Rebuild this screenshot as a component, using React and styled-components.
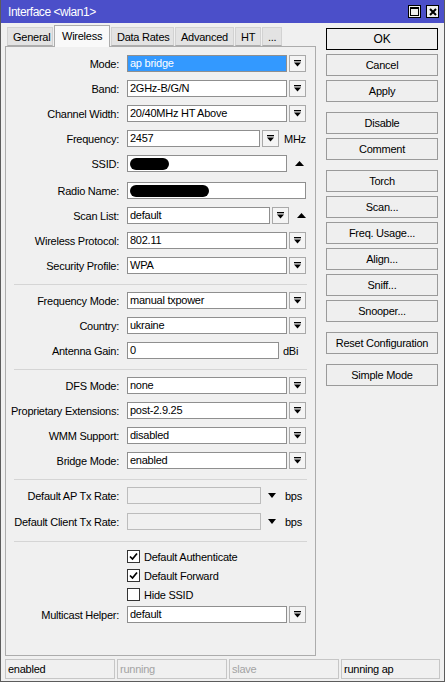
import React from 'react'
import styled, { createGlobalStyle } from 'styled-components'

const GlobalStyle = createGlobalStyle`
	html, body {
		margin: 0;
		padding: 0;
		background: #ffffff;
	}
	body {
		font-family: 'Liberation Sans', Arial, sans-serif;
		font-size: 11px;
		letter-spacing: -0.25px;
		color: #000;
	}
	* {
		box-sizing: border-box;
	}
`

const Window = styled.div`
	width: 445px;
	height: 682px;
	background: #f0f0f0;
	border: 1px solid #5c5c5c;
	border-top: none;
	display: flex;
	flex-direction: column;
`

const TitleBar = styled.div`
	height: 23px;
	flex: none;
	background: #4b4fc9;
	color: #fff;
	display: flex;
	align-items: center;
	padding: 0 5px 0 7px;
	font-size: 12px;
	letter-spacing: -0.45px;
`

const Title = styled.div`
	flex: 1;
	padding-top: 1px;
`

const TitleButton = styled.div`
	width: 13px;
	height: 13px;
	margin-left: 5px;
	background: #f0f0f0;
	border: 1px solid #000;
	display: flex;
	align-items: center;
	justify-content: center;
`

const Body = styled.div`
	flex: 1;
	display: flex;
	padding: 2px 0 0 4px;
	min-height: 0;
`

const LeftColumn = styled.div`
	width: 311px;
	display: flex;
	flex-direction: column;
`

const TabRow = styled.div`
	height: 21px;
	display: flex;
	align-items: flex-end;
	gap: 1px;
	padding-left: 2px;
	position: relative;
	z-index: 1;
`

const Tab = styled.div`
	width: ${p => p.$w}px;
	height: ${p => (p.$active ? 22 : 19)}px;
	margin-bottom: ${p => (p.$active ? -1 : 0)}px;
	padding: ${p => (p.$active ? '4px 0 0 7px' : '3px 0 0 5px')};
	background: ${p => (p.$active ? '#f9f9f9' : '#e3e3e3')};
	border: 1px solid ${p => (p.$active ? '#acacac' : '#d2d2d2')};
	border-bottom: ${p => (p.$active ? 'none' : '1px solid #acacac')};
	white-space: nowrap;
`

const Panel = styled.div`
	flex: 1;
	border: 1px solid #acacac;
	background: #f0f0f0;
	padding-top: 8px;
	display: flex;
	flex-direction: column;
`

const Section = styled.div`
	display: flex;
	flex-direction: column;
	gap: ${p => p.$gap ?? 8}px;
`

const Separator = styled.div`
	height: 1px;
	background: #d5d5d5;
	margin: ${p => p.$top ?? 10}px 8px ${p => p.$bottom ?? 7}px 8px;
`

const Row = styled.div`
	display: grid;
	grid-template-columns: 113px 1fr;
	column-gap: 8px;
	align-items: center;
	height: ${p => p.$h ?? 17}px;
	margin-top: ${p => p.$mt ?? 0}px;
`

const Label = styled.div`
	text-align: right;
	white-space: nowrap;
`

const Controls = styled.div`
	display: flex;
	align-items: center;
	gap: 2px;
`

const Field = styled.div`
	width: ${p => p.$w}px;
	height: 17px;
	border: 1px solid ${p => (p.$disabled ? '#bcbcbc' : '#8f8f8f')};
	background: ${p => (p.$selected ? '#3399ff' : p.$disabled ? '#f0f0f0' : '#fff')};
	color: ${p => (p.$selected ? '#fff' : '#000')};
	padding: 0 2px;
	line-height: 15px;
	white-space: nowrap;
	overflow: hidden;
	display: flex;
	align-items: center;
`

const DropButton = styled.div`
	width: 17px;
	height: 17px;
	border: 1px solid #a9a9a9;
	background: #f4f4f4;
	display: flex;
	align-items: center;
	justify-content: center;
`

const Unit = styled.span`
	margin-left: ${p => p.$ml ?? 3}px;
`

const Blob = styled.div`
	width: ${p => p.$w}px;
	height: 12px;
	border-radius: 6px;
	background: #000;
`

const CheckLine = styled.div`
	display: flex;
	align-items: center;
	gap: 4px;
`

const Box = styled.div`
	width: 13px;
	height: 13px;
	border: 1px solid #333;
	background: #fff;
	display: flex;
	align-items: center;
	justify-content: center;
`

const RightColumn = styled.div`
	width: 112px;
	margin-left: 10px;
	padding-top: 3px;
	display: flex;
	flex-direction: column;
`

const ButtonGroup = styled.div`
	display: flex;
	flex-direction: column;
	gap: 4px;
	margin-bottom: 10px;
`

const ActionButton = styled.div`
	height: 22px;
	border: 1px solid ${p => (p.$default ? '#000' : '#9a9a9a')};
	background: #efefef;
	display: flex;
	align-items: center;
	justify-content: center;
	white-space: nowrap;
	font-size: ${p => (p.$default ? 12 : 11)}px;
`

const StatusBar = styled.div`
	flex: none;
	height: 20px;
	margin: 3px 0 2px 0;
	padding-left: 4px;
	display: flex;
	gap: 2px;
`

const StatusCell = styled.div`
	width: ${p => p.$w}px;
	border: 1px solid #c6c6c6;
	padding: 0 2px;
	display: flex;
	align-items: center;
	color: ${p => (p.$dim ? '#a3a3a3' : '#000')};
`

const DropIcon = () => (
	<svg width="7" height="7" viewBox="0 0 7 7">
		<rect x="0" y="0" width="7" height="1.3" fill="#000" />
		<path d="M0 2.6H7L3.5 6.6Z" fill="#000" />
	</svg>
)

const UpArrow = () => (
	<svg width="9" height="5" viewBox="0 0 9 5" style={{ marginLeft: 6 }}>
		<path d="M0 5L4.5 0L9 5Z" fill="#000" />
	</svg>
)

const DownArrow = () => (
	<svg width="8" height="5" viewBox="0 0 8 5" style={{ marginLeft: 5 }}>
		<path d="M0 0H8L4 5Z" fill="#000" />
	</svg>
)

const Check = () => (
	<svg width="9" height="9" viewBox="0 0 9 9">
		<path d="M1 4.5L3.5 7L8 1.5" fill="none" stroke="#000" strokeWidth="1.7" />
	</svg>
)

const tabs = [
	{ name: 'General', w: 46 },
	{ name: 'Wireless', w: 56, active: true },
	{ name: 'Data Rates', w: 63 },
	{ name: 'Advanced', w: 59 },
	{ name: 'HT', w: 26 },
	{ name: '...', w: 20 },
]

const buttonGroups = [
	['OK', 'Cancel', 'Apply'],
	['Disable', 'Comment'],
	['Torch', 'Scan...', 'Freq. Usage...', 'Align...', 'Sniff...', 'Snooper...'],
	['Reset Configuration'],
	['Simple Mode'],
]

function Select({ value, w = 160, selected }) {
	return (
		<Controls>
			<Field $w={w} $selected={selected}>{value}</Field>
			<DropButton>
				<DropIcon />
			</DropButton>
		</Controls>
	)
}

export default function App() {
	return (
		<>
			<GlobalStyle />
			<Window>
				<TitleBar>
					<Title>Interface &lt;wlan1&gt;</Title>
					<TitleButton>
						<svg width="9" height="9" viewBox="0 0 9 9">
							<rect x="0.5" y="0.5" width="8" height="8" fill="none" stroke="#000" />
							<rect x="0" y="0" width="9" height="2" fill="#000" />
						</svg>
					</TitleButton>
					<TitleButton>
						<svg width="8" height="8" viewBox="0 0 8 8">
							<path d="M1 1L7 7M7 1L1 7" stroke="#000" strokeWidth="2" />
						</svg>
					</TitleButton>
				</TitleBar>
				<Body>
					<LeftColumn>
						<TabRow>
							{tabs.map(t => (
								<Tab key={t.name} $w={t.w} $active={t.active}>
									{t.name}
								</Tab>
							))}
						</TabRow>
						<Panel>
							<Section>
								<Row>
									<Label>Mode:</Label>
									<Select value="ap bridge" selected />
								</Row>
								<Row>
									<Label>Band:</Label>
									<Select value="2GHz-B/G/N" />
								</Row>
								<Row>
									<Label>Channel Width:</Label>
									<Select value="20/40MHz HT Above" />
								</Row>
								<Row>
									<Label>Frequency:</Label>
									<Controls>
										<Field $w={133}>2457</Field>
										<DropButton>
											<DropIcon />
										</DropButton>
										<Unit $ml={3}>MHz</Unit>
									</Controls>
								</Row>
								<Row>
									<Label>SSID:</Label>
									<Controls>
										<Field $w={160}>
											<Blob $w={39} />
										</Field>
										<UpArrow />
									</Controls>
								</Row>
								<Row $mt={2}>
									<Label>Radio Name:</Label>
									<Controls>
										<Field $w={179}>
											<Blob $w={79} />
										</Field>
									</Controls>
								</Row>
								<Row>
									<Label>Scan List:</Label>
									<Controls>
										<Field $w={143}>default</Field>
										<DropButton>
											<DropIcon />
										</DropButton>
										<UpArrow />
									</Controls>
								</Row>
								<Row>
									<Label>Wireless Protocol:</Label>
									<Select value="802.11" />
								</Row>
								<Row>
									<Label>Security Profile:</Label>
									<Select value="WPA" />
								</Row>
							</Section>
							<Separator />
							<Section>
								<Row>
									<Label>Frequency Mode:</Label>
									<Select value="manual txpower" />
								</Row>
								<Row>
									<Label>Country:</Label>
									<Select value="ukraine" />
								</Row>
								<Row>
									<Label>Antenna Gain:</Label>
									<Controls>
										<Field $w={152}>0</Field>
										<Unit $ml={2}>dBi</Unit>
									</Controls>
								</Row>
							</Section>
							<Separator />
							<Section>
								<Row>
									<Label>DFS Mode:</Label>
									<Select value="none" />
								</Row>
								<Row>
									<Label>Proprietary Extensions:</Label>
									<Select value="post-2.9.25" />
								</Row>
								<Row>
									<Label>WMM Support:</Label>
									<Select value="disabled" />
								</Row>
								<Row>
									<Label>Bridge Mode:</Label>
									<Select value="enabled" />
								</Row>
							</Section>
							<Separator />
							<Section $gap={9}>
								<Row>
									<Label>Default AP Tx Rate:</Label>
									<Controls>
										<Field $w={134} $disabled />
										<DownArrow />
										<Unit $ml={7}>bps</Unit>
									</Controls>
								</Row>
								<Row>
									<Label>Default Client Tx Rate:</Label>
									<Controls>
										<Field $w={134} $disabled />
										<DownArrow />
										<Unit $ml={7}>bps</Unit>
									</Controls>
								</Row>
							</Section>
							<Separator $top={11} $bottom={5} />
							<Section $gap={0}>
								<Row $h={19}>
									<span />
									<CheckLine>
										<Box>
											<Check />
										</Box>
										Default Authenticate
									</CheckLine>
								</Row>
								<Row $h={19}>
									<span />
									<CheckLine>
										<Box>
											<Check />
										</Box>
										Default Forward
									</CheckLine>
								</Row>
								<Row $h={19}>
									<span />
									<CheckLine>
										<Box />
										Hide SSID
									</CheckLine>
								</Row>
								<Row $mt={2}>
									<Label>Multicast Helper:</Label>
									<Select value="default" />
								</Row>
							</Section>
						</Panel>
					</LeftColumn>
					<RightColumn>
						{buttonGroups.map((group, i) => (
							<ButtonGroup key={i}>
								{group.map(b => (
									<ActionButton key={b} $default={b === 'OK'}>
										{b}
									</ActionButton>
								))}
							</ButtonGroup>
						))}
					</RightColumn>
				</Body>
				<StatusBar>
					<StatusCell $w={110}>enabled</StatusCell>
					<StatusCell $w={110} $dim>running</StatusCell>
					<StatusCell $w={110} $dim>slave</StatusCell>
					<StatusCell $w={99}>running ap</StatusCell>
				</StatusBar>
			</Window>
		</>
	)
}
